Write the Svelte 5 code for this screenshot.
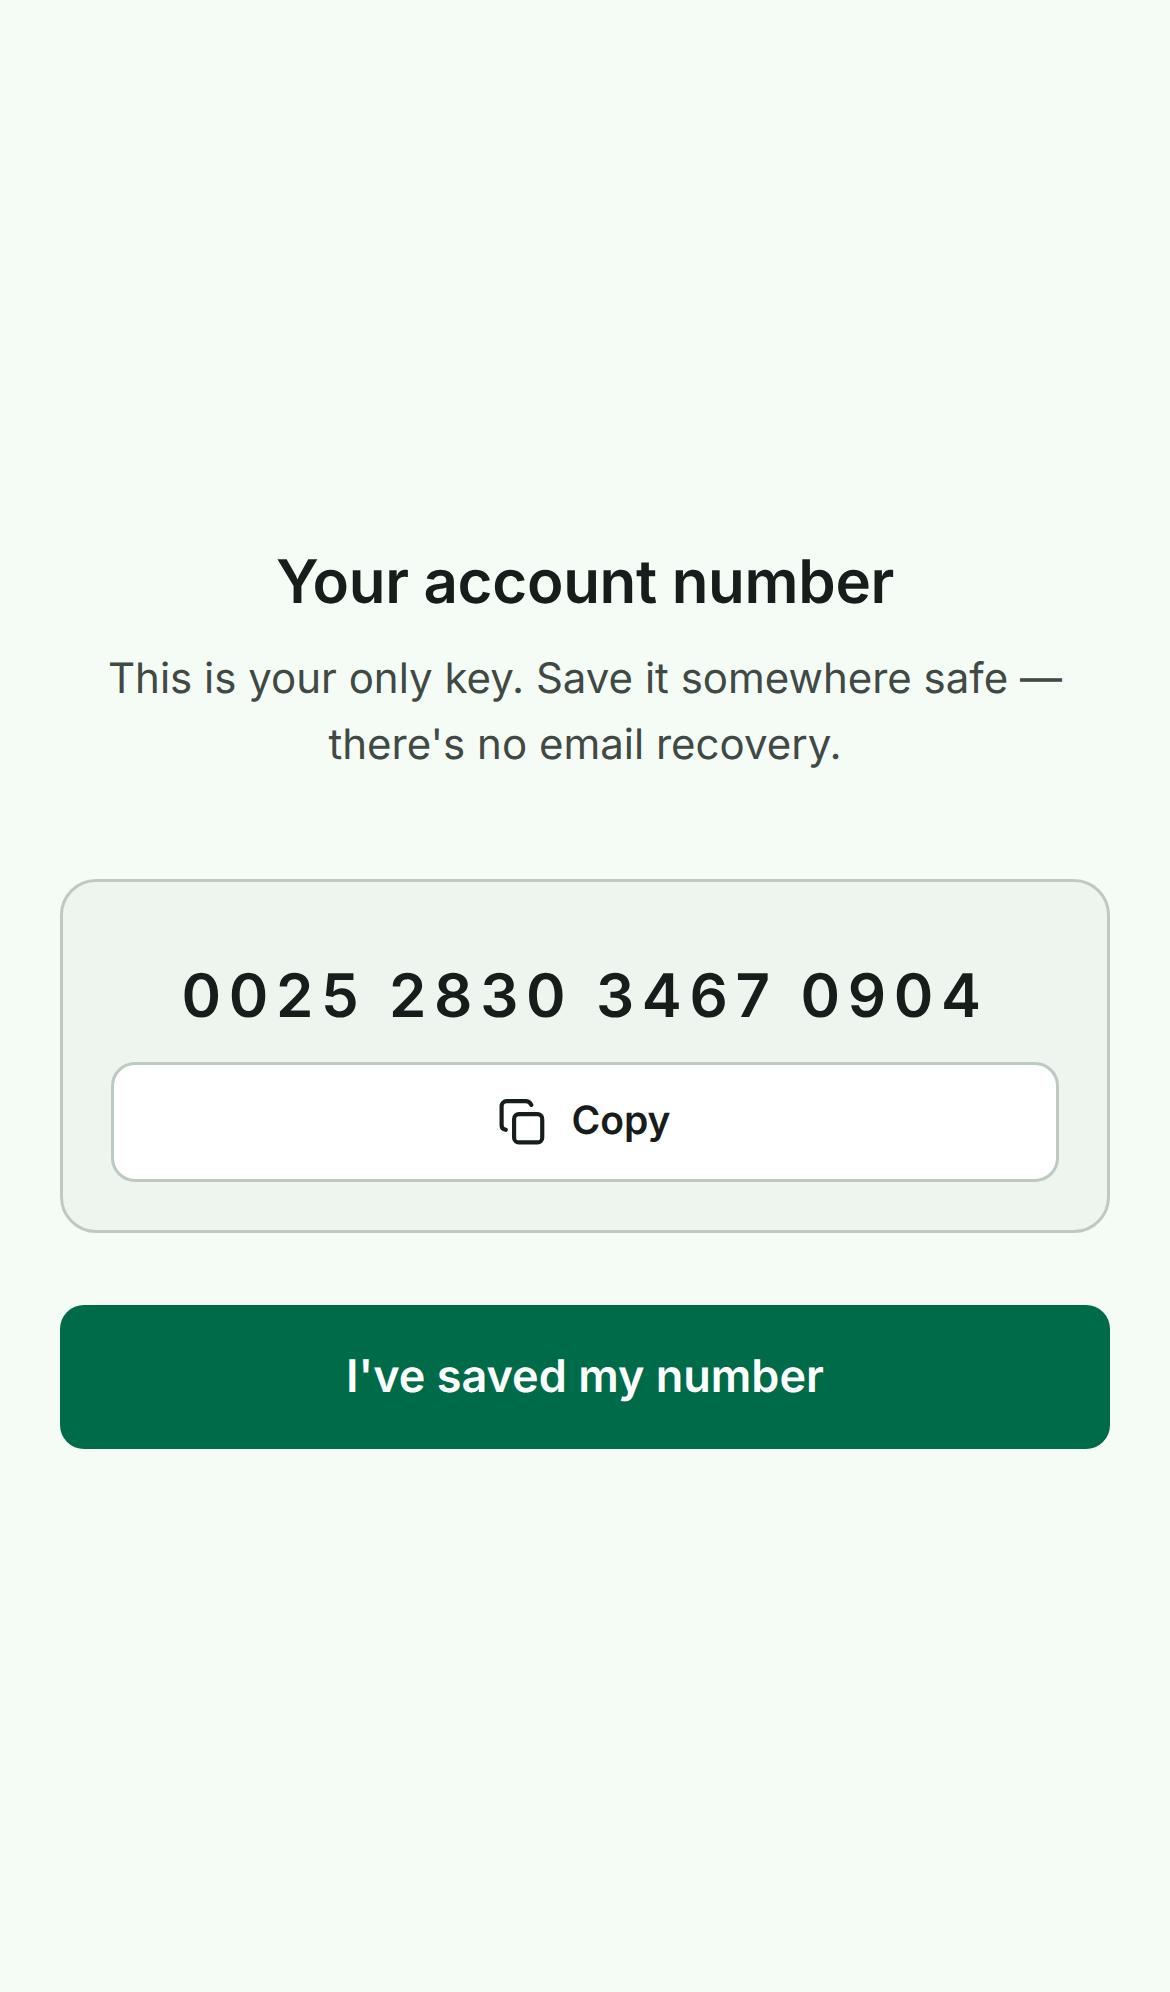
<script>
  const accountNumber = '0025 2830 3467 0904';
</script>

<main class="page">
  <section class="content">
    <header class="intro">
      <h1>Your account number</h1>
      <p>This is your only key. Save it somewhere safe — there's no email recovery.</p>
    </header>

    <div class="card">
      <div class="number">{accountNumber}</div>
      <button class="copy" type="button">
        <svg width="50" height="50" viewBox="2 0 48 48" fill="none" stroke="currentColor" stroke-width="4" stroke-linecap="round" stroke-linejoin="round">
          <rect x="16.500" y="16.500" width="27" height="27" rx="4.500" />
          <path d="M8.500 31.500 C6 31 4.500 29 4.500 27 V9 C4.500 6 6.500 4 9.500 4 H27.500 C30 4 32 5.500 33 7.500" />
        </svg>
        <span>Copy</span>
      </button>
    </div>

    <button class="primary" type="button">I've saved my number</button>
  </section>
</main>

<style>
  :global(body) {
    margin: 0;
    background: #f5fcf6;
  }

  .page {
    min-height: 1992px;
    box-sizing: border-box;
    padding: 0 60px;
    display: flex;
    align-items: center;
    font-family: Inter, "Liberation Sans", sans-serif;
    color: #171d1a;
    text-rendering: geometricPrecision;
  }

  .content {
    width: 100%;
    display: flex;
    flex-direction: column;
  }

  .intro {
    text-align: center;
    margin-bottom: 101px;
  }

  h1 {
    margin: 0 0 25px;
    font-size: 60px;
    line-height: 78px;
    font-weight: 600;
    letter-spacing: -0.3px;
  }

  p {
    margin: 0;
    font-size: 42px;
    line-height: 66px;
    color: #404944;
  }

  .card {
    background: #eef5ef;
    border: 3px solid #bdc9c1;
    border-radius: 36px;
    padding: 72px 48px 48px;
    display: flex;
    flex-direction: column;
    gap: 24px;
  }

  .number {
    text-align: center;
    font-size: 60px;
    line-height: 84px;
    font-weight: 600;
    letter-spacing: 7.650px;
  }

  .copy {
    height: 120px;
    background: #fff;
    border: 3px solid #bdc9c1;
    border-radius: 24px;
    display: flex;
    align-items: center;
    justify-content: center;
    gap: 22px;
    font: 600 39px Inter, sans-serif;
    color: #171d1a;
    text-rendering: geometricPrecision;
  }

  .copy span {
    padding-bottom: 4px;
  }

  .primary {
    margin-top: 72px;
    height: 144px;
    padding: 0 0 4px;
    background: #006b49;
    border: 0;
    border-radius: 24px;
    color: #fff;
    font: 600 45px Inter, sans-serif;
    text-rendering: geometricPrecision;
  }
</style>
